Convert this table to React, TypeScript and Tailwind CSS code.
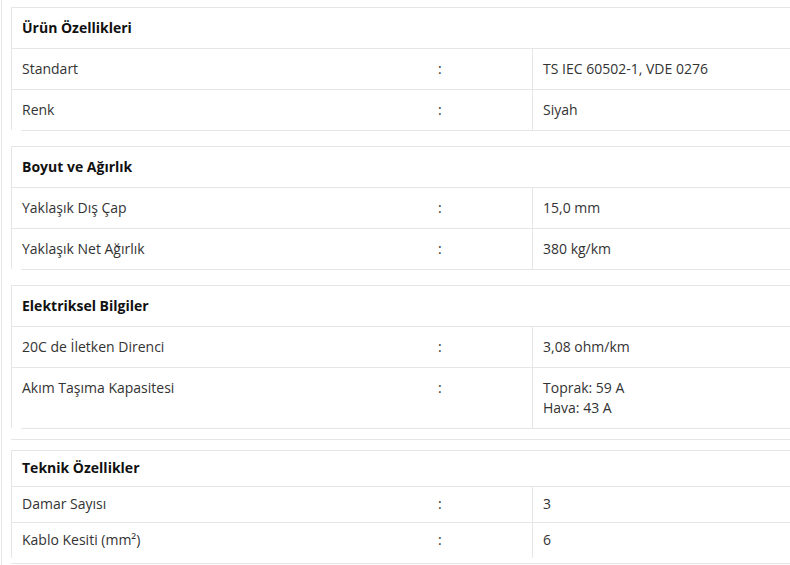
const font = { fontFamily: '"Open Sans", "Liberation Sans", sans-serif' };

type Row = { label: string; value: string[] };
type Section = { title: string; rows: Row[] };

const sections: Section[] = [
  {
    title: "Ürün Özellikleri",
    rows: [
      { label: "Standart", value: ["TS IEC 60502-1, VDE 0276"] },
      { label: "Renk", value: ["Siyah"] },
    ],
  },
  {
    title: "Boyut ve Ağırlık",
    rows: [
      { label: "Yaklaşık Dış Çap", value: ["15,0 mm"] },
      { label: "Yaklaşık Net Ağırlık", value: ["380 kg/km"] },
    ],
  },
  {
    title: "Elektriksel Bilgiler",
    rows: [
      { label: "20C de İletken Direnci", value: ["3,08 ohm/km"] },
      { label: "Akım Taşıma Kapasitesi", value: ["Toprak: 59 A", "Hava: 43 A"] },
    ],
  },
];

const SpecRow = ({ row, last, tight }: { row: Row; last: boolean; tight?: boolean }) => {
  const pad = tight ? "pt-[7px] pb-[8px]" : "py-[10px]";
  return (
    <div className={`flex ${last ? "" : "border-b border-[#e6e6e6]"}`}>
      <div className={`w-[419px] pl-[10px] ${pad}`}>{row.label}</div>
      <div className={`w-[101px] pl-[7px] ${pad}`}>:</div>
      <div className={`flex-1 border-l border-[#e6e6e6] pl-[10px] ${pad}`}>
        {row.value.map((v) => (
          <div key={v}>{v}</div>
        ))}
      </div>
    </div>
  );
};

const SpecSection = ({ section }: { section: Section }) => (
  <div>
    <div className="border-l border-t border-[#e6e6e6]">
      <div className="border-b border-[#e6e6e6] py-[10px] pl-[10px] font-bold text-[#111]">
        {section.title}
      </div>
      {section.rows.map((r, i) => (
        <SpecRow key={r.label} row={r} last={i === section.rows.length - 1} />
      ))}
    </div>
    <div className="ml-[10px] border-t border-[#e6e6e6]" />
  </div>
);

export default function App() {
  const teknik: Row[] = [
    { label: "Damar Sayısı", value: ["3"] },
    { label: "Kablo Kesiti (mm²)", value: ["6"] },
  ];

  return (
    <div className="min-h-[565px] bg-white text-[14px] leading-[20px] text-[#333]" style={font}>
      <div className="ml-px min-h-[565px] border-l border-[#e8e8e8] pl-[9px] pt-[7px]">
        <div className="flex flex-col gap-[15px]">
          <SpecSection section={sections[0]} />
          <SpecSection section={sections[1]} />
          <SpecSection section={sections[2]} />
        </div>
        <div className="mt-[10px] border-t border-[#e6e6e6]" />
        <div className="mt-[10px] border-l border-t border-[#e6e6e6]">
          <div className="border-b border-[#e6e6e6] pt-[7px] pb-[8px] pl-[10px] font-bold text-[#111]">
            Teknik Özellikler
          </div>
          {teknik.map((r, i) => (
            <SpecRow key={r.label} row={r} last={i === teknik.length - 1} tight />
          ))}
        </div>
        <div className="mt-[5px] border-t border-[#e6e6e6]" />
      </div>
    </div>
  );
}
